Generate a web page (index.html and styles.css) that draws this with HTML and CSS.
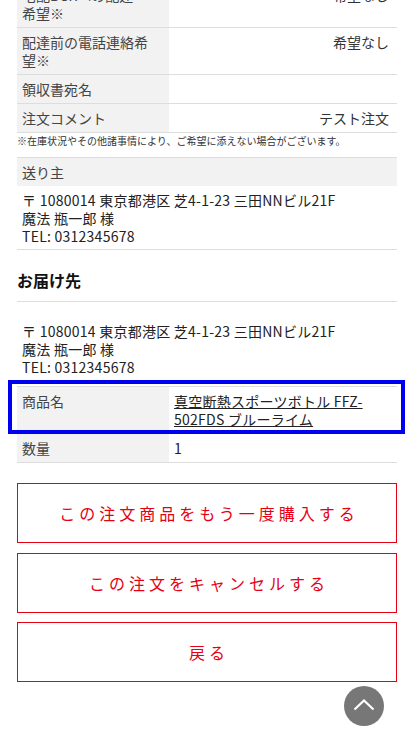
FILE: index.html
```html
<!DOCTYPE html>
<html lang="ja">
<head>
<meta charset="utf-8">
<meta name="viewport" content="width=device-width, initial-scale=1">
<title>注文詳細</title>
<link rel="stylesheet" href="styles.css">
</head>
<body>
<main class="page">
  <div class="table">
    <div class="row">
      <div class="th">宅配BOXへの配達<br>希望※</div>
      <div class="td right">希望なし</div>
    </div>
    <div class="row">
      <div class="th">配達前の電話連絡希望※</div>
      <div class="td right">希望なし</div>
    </div>
    <div class="row">
      <div class="th">領収書宛名</div>
      <div class="td right"></div>
    </div>
    <div class="row">
      <div class="th">注文コメント</div>
      <div class="td right">テスト注文</div>
    </div>
  </div>
  <p class="note">※在庫状況やその他諸事情により、ご希望に添えない場合がございます。</p>

  <section class="sender">
    <div class="sender-head">送り主</div>
    <div class="address">〒 1080014 東京都港区 芝4-1-23 三田NNビル21F<br>魔法 瓶一郎 様<br>TEL: 0312345678</div>
  </section>

  <h2 class="heading">お届け先</h2>
  <div class="address dest">〒 1080014 東京都港区 芝4-1-23 三田NNビル21F<br>魔法 瓶一郎 様<br>TEL: 0312345678</div>

  <div class="table items">
    <div class="row highlight">
      <div class="th">商品名</div>
      <div class="td"><a class="product" href="#">真空断熱スポーツボトル FFZ-502FDS ブルーライム</a></div>
    </div>
    <div class="row">
      <div class="th">数量</div>
      <div class="td qty">1</div>
    </div>
  </div>

  <div class="actions">
    <a class="btn" href="#">この注文商品をもう一度購入する</a>
    <a class="btn" href="#">この注文をキャンセルする</a>
    <a class="btn" href="#">戻る</a>
  </div>
</main>
<a class="totop" href="#" aria-label="ページトップへ">
  <svg width="40" height="40" viewBox="0 0 40 40"><path d="M10.5 23.5 L20 14.5 L29.5 23.5" fill="none" stroke="#fff" stroke-width="2.2"/></svg>
</a>
</body>
</html>
```
FILE: styles.css
```css
* { box-sizing: border-box; }
html, body { margin: 0; padding: 0; background: #fff; }
body {
  font-family: "Noto Sans CJK JP", "Noto Sans", sans-serif;
  color: #333;
  font-size: 14px;
  line-height: 18px;
}
.page {
  padding: 0 17px 60px;
  margin-top: -20px;
}
.table { border-top: 1px solid #ddd; }
.row {
  display: grid;
  grid-template-columns: 40% 60%;
  border-bottom: 1px solid #ddd;
}
.th {
  background: #f2f2f2;
  color: #444;
  padding: 5px 10px 5px 5px;
}
.td {
  padding: 5px 8px 5px 5px;
  color: #333;
}
.td.right { text-align: right; }
.td.qty { color: #222; }
.note {
  margin: 0;
  font-size: 10px;
  line-height: 16px;
  color: #333;
}
.sender {
  margin-top: 8px;
  border-top: 1px solid #ddd;
  border-bottom: 1px solid #ddd;
}
.sender-head {
  background: #f2f2f2;
  color: #444;
  padding: 5px 5px;
  height: 28px;
  line-height: 18px;
}
.address {
  padding: 5px 5px 4px;
  color: #222;
  letter-spacing: 0.25px;
  line-height: 18px;
}
.heading {
  margin: 0;
  font-size: 16px;
  font-weight: 700;
  color: #111;
  line-height: 20px;
  padding: 20px 0 11px;
  border-bottom: 1px solid #ddd;
}
.address.dest {
  padding: 20px 5px 0;
}
.items { margin-top: 10px; }
.highlight { position: relative; }
.highlight::after {
  content: "";
  position: absolute;
  top: -7px;
  left: -9px;
  right: -8px;
  bottom: -1px;
  border: 4px solid #0000f0;
  pointer-events: none;
}
.product {
  color: #222;
  letter-spacing: 0.25px;
  text-decoration: underline;
}
.actions {
  margin-top: 20px;
  display: flex;
  flex-direction: column;
  gap: 9.5px;
}
.btn {
  display: flex;
  align-items: center;
  justify-content: center;
  height: 60px;
  border: 1px solid #e60012;
  color: #e60012;
  font-size: 16px;
  letter-spacing: 4px;
  text-decoration: none;
  padding-left: 4px;
}
.totop {
  position: fixed;
  right: 30px;
  bottom: 10px;
  width: 40px;
  height: 40px;
  border-radius: 50%;
  background: #777;
  display: block;
}
.totop svg { display: block; }
```
